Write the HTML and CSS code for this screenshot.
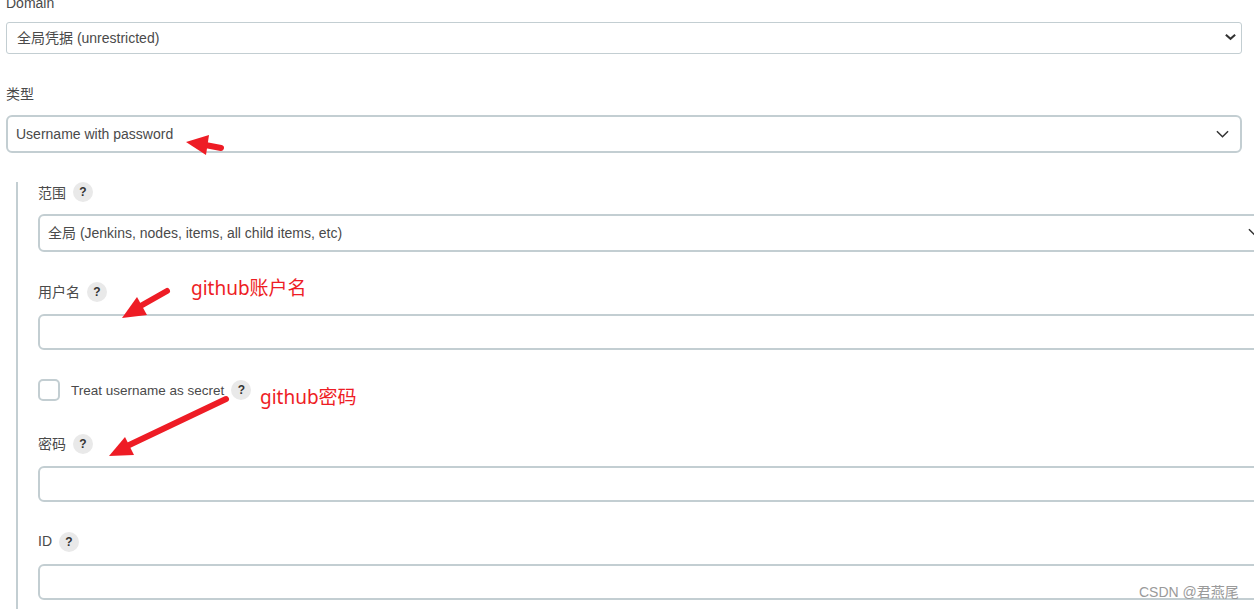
FILE: index.html
```html
<!DOCTYPE html>
<html lang="en">

<head>
    <meta charset="UTF-8">
    <meta name="viewport" content="width=device-width, initial-scale=1.0">
    <title>Jenkins credentials</title>
    <link rel="stylesheet" href="styles.css">
</head>

<body>
    <form class="credentials-form">
        <div class="field domain-field">
            <div class="field-label">Domain</div>
            <div class="select select-small">
                <span>全局凭据 (unrestricted)</span>
                <svg class="chevron chevron-small" viewBox="0 0 14 8"><path d="M2 1.5 7 6l5-4.5"/></svg>
            </div>
        </div>
        <div class="field">
            <div class="field-label">类型</div>
            <div class="select">
                <span>Username with password</span>
                <svg class="chevron" viewBox="0 0 14 8"><path d="M1 1l6 6 6-6"/></svg>
            </div>
        </div>

        <div class="nested">
            <div class="field">
                <div class="field-label">范围 <span class="help">?</span></div>
                <div class="select select-scope">
                    <span>全局 (Jenkins, nodes, items, all child items, etc)</span>
                    <svg class="chevron" viewBox="0 0 14 8"><path d="M1 1l6 6 6-6"/></svg>
                </div>
            </div>
            <div class="field">
                <div class="field-label"><span class="label-text">用户名</span> <span class="help">?</span></div>
                <div class="text-input"></div>
            </div>
            <div class="checkbox-row">
                <span class="checkbox"></span>
                <span class="checkbox-label">Treat username as secret</span>
                <span class="help">?</span>
            </div>
            <div class="field">
                <div class="field-label"><span class="label-text">密码</span> <span class="help">?</span></div>
                <div class="text-input"></div>
            </div>
            <div class="field last-field">
                <div class="field-label"><span class="label-text">ID</span> <span class="help">?</span></div>
                <div class="text-input"></div>
            </div>
        </div>
    </form>

    <!-- red notes drawn on top of the screenshot -->
    <svg class="arrows" width="1254" height="609" viewBox="0 0 1254 609">
        <path class="arrow-shaft" d="M200 144 221 148"/>
        <path class="arrow-head" d="M186 142 209 135 206 155Z"/>
        <path class="arrow-shaft" d="M167 291 137 308"/>
        <path class="arrow-head" d="M122 318 137 297 147 315Z"/>
        <path class="arrow-shaft" d="M226 399 125 447"/>
        <path class="arrow-head" d="M109 456 125 437 134 455Z"/>
    </svg>
    <span class="note note-user">github账户名</span>
    <span class="note note-pass">github密码</span>
    <span class="watermark">CSDN @君燕尾</span>
</body>

</html>
```
FILE: styles.css
```css
body {
    display: flow-root;
    margin: 0;
    height: 609px;
    overflow: hidden;
    position: relative;
    background-color: white;
    font-family: "Liberation Sans", "Noto Sans CJK SC", sans-serif;
    font-size: 14px;
    color: #4a4a4a;
}

.credentials-form {
    width: 1236px;
    margin-left: 6px;
    margin-top: -7px;
}

.field {
    margin-bottom: 29px;
}

.field-label {
    display: flex;
    align-items: center;
    gap: 7px;
    height: 20px;
    margin-bottom: 12px;
}

.label-text {
    margin-bottom: 2px;
}

.domain-field .field-label {
    margin-bottom: 9px;
}

.select, .text-input {
    box-sizing: border-box;
    width: 1236px;
    border: 2px solid #c3ced2;
    border-radius: 6px;
}

.select {
    display: flex;
    align-items: center;
    justify-content: space-between;
    height: 38px;
    padding: 0 11px 0 8px;
}

.select-small {
    height: 32px;
    border-width: 1px;
    border-radius: 3px;
    padding: 0 4px 2px 10px;
}

.select-scope {
    padding-bottom: 2px;
}

.text-input {
    height: 36px;
}

.chevron {
    width: 13px;
    height: 8px;
    fill: none;
    stroke: #333;
    stroke-width: 1.6;
}

.chevron-small {
    stroke-width: 2.2;
}

.nested {
    box-sizing: border-box;
    width: 1258px;
    margin-left: 10px;
    padding-left: 20px;
    padding-bottom: 9px;
    border-left: 2px solid #c3ced2;
}

.nested .field {
    margin-bottom: 30px;
}

.nested .last-field {
    margin-bottom: 0;
}

.help {
    display: flex;
    align-items: center;
    justify-content: center;
    width: 20px;
    height: 20px;
    border-radius: 50%;
    background-color: #e9e9e9;
    color: #333;
    font-size: 12px;
    font-weight: bold;
}

.checkbox-row {
    display: flex;
    align-items: center;
    height: 22px;
    margin-top: -1px;
    margin-bottom: 33px;
}

.checkbox {
    box-sizing: border-box;
    width: 22px;
    height: 22px;
    border: 2px solid #c3ced2;
    border-radius: 5px;
}

.checkbox-label {
    margin-left: 11px;
    margin-right: 7px;
    font-size: 13.5px;
}

.arrows {
    position: absolute;
    top: 0;
    left: 0;
}

.arrow-shaft {
    fill: none;
    stroke: #ee1c25;
    stroke-width: 6;
    stroke-linecap: round;
}

.arrow-head {
    fill: #ee1c25;
}

.note {
    position: absolute;
    font-family: "Noto Sans", "Noto Sans CJK SC", sans-serif;
    font-size: 19px;
    line-height: 24px;
    color: #ee1c25;
}

.note-user {
    left: 191px;
    top: 276px;
}

.note-pass {
    left: 260px;
    top: 385px;
}

.watermark {
    position: absolute;
    left: 1139px;
    top: 583px;
    color: #9a9a9a;
    font-size: 14px;
    line-height: 18px;
}
```
